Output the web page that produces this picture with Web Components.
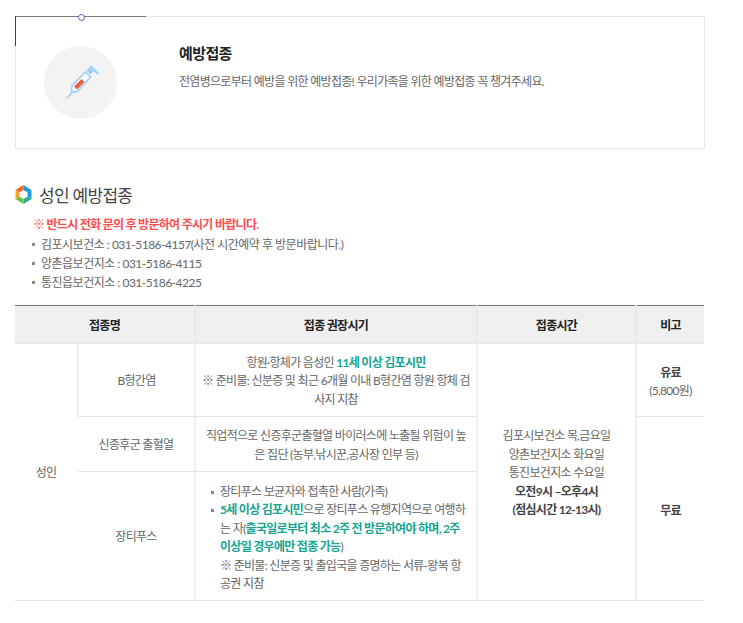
<!DOCTYPE html>
<html lang="ko">
<head>
<meta charset="utf-8">
<title>예방접종</title>
<style>
  body {
    margin: 0;
    padding: 16px 38px 22px 15px;
    background: #fff;
    color: #666;
    font-family: "Lato", "Noto Sans CJK KR", sans-serif;
    font-size: 12px;
  }
</style>
</head>
<body>
<intro-box heading="예방접종">전염병으로부터 예방을 위한 예방접종! 우리가족을 위한 예방접종 꼭 챙겨주세요.</intro-box>
<section-title>성인 예방접종</section-title>
<notice-list>
  <span slot="warn">※ 반드시 전화 문의 후 방문하여 주시기 바랍니다.</span>
  <li>김포시보건소 : 031-5186-4157(사전 시간예약 후 방문바랍니다.)</li>
  <li>양촌읍보건지소 : 031-5186-4115</li>
  <li>통진읍보건지소 : 031-5186-4225</li>
</notice-list>
<vaccine-table></vaccine-table>

<script>
// intro card with the syringe icon
class IntroBox extends HTMLElement {
  constructor() {
    super();
    this.attachShadow({ mode: "open" });
    this.render();
  }

  render() {
    this.shadowRoot.innerHTML = `
      <style>
        :host {
          display: flex;
          position: relative;
          height: 131px;
          border: 1px solid #e8e8e8;
          align-items: flex-start;
        }
        .line-h { position: absolute; left: -1px; top: -1px; width: 131px; height: 1px; background: #777; }
        .line-v { position: absolute; left: -1px; top: -1px; width: 1px; height: 30px; background: #444; }
        .dot {
          position: absolute; left: 62px; top: -3px;
          width: 5px; height: 5px;
          border: 1.5px solid #4a69bd; border-radius: 50%; background: #fff;
        }
        .circle {
          flex: none;
          width: 73px; height: 73px;
          margin: 29px 0 0 28px;
          border-radius: 50%;
          background: #f3f3f3;
          display: flex; align-items: center; justify-content: center;
        }
        .text { margin: 26px 0 0 62px; }
        h2 { margin: 0; font-size: 15px; line-height: 20px; font-weight: 700; color: #222; letter-spacing: -0.6px; }
        p { margin: 10px 0 0; font-size: 12px; line-height: 18px; color: #666; white-space: nowrap; letter-spacing: -0.7px; }
      </style>
      <span class="line-h"></span><span class="line-v"></span><span class="dot"></span>
      <div class="circle">
        <svg width="36" height="36" viewBox="62.500 64 36 36" fill="none">
          <path d="M66 97.300l5-5" stroke="#95cbfb" stroke-width="1.500"/>
          <path d="M85 71l5 5-12.500 14-6.500 1.500.5-7z" stroke="#95cbfb" stroke-width="1.500" fill="#fff" stroke-linejoin="round"/>
          <path d="M75 87l7.500-7.500" stroke="#e8604c" stroke-width="4.500" stroke-linecap="butt"/>
          <path d="M86 69.500l3-3 4 4-3 3z" fill="#95cbfb"/>
          <path d="M89.500 65l8.500 8" stroke="#95cbfb" stroke-width="2"/>
        </svg>
      </div>
      <div class="text">
        <h2>${this.getAttribute("heading")}</h2>
        <p><slot></slot></p>
      </div>
    `;
  }
}

// section heading with the hexagon mark
class SectionTitle extends HTMLElement {
  constructor() {
    super();
    this.attachShadow({ mode: "open" });
    this.shadowRoot.innerHTML = `
      <style>
        :host {
          display: flex;
          align-items: center;
          gap: 7px;
          margin-top: 34px;
          height: 22px;
          font-size: 17px;
          color: #444;
          letter-spacing: -0.7px;
        }
      </style>
      <svg width="17" height="19" viewBox="0 0 17 19">
        <path d="M8.500 0L8.500 5 4.500 7.300 0.500 5z" fill="#f2682a"/>
        <path d="M8.500 0L16.500 5 12.500 7.300 8.500 5z" fill="#1e9be0"/>
        <path d="M16.500 5V14L12.500 11.700V7.300z" fill="#1e9be0"/>
        <path d="M16.500 14L8.500 19V14L12.500 11.700z" fill="#2fae8f"/>
        <path d="M8.500 19L0.500 14 4.500 11.700 8.500 14z" fill="#6cc04a"/>
        <path d="M0.500 14V5L4.500 7.300V11.700z" fill="#f5a623"/>
      </svg>
      <slot></slot>
    `;
  }
}

// red warning plus the list of phone numbers
class NoticeList extends HTMLElement {
  constructor() {
    super();
    this.attachShadow({ mode: "open" });
    this.shadowRoot.innerHTML = `
      <style>
        :host {
          display: block;
          margin: 10px 0 0 17px;
          line-height: 19px;
          letter-spacing: -0.5px;
        }
        .warn { color: #ff4d4d; font-weight: 700; margin: 0 0 1px 1px; font-size: 12px; letter-spacing: -0.7px; }
        ::slotted(li) {
          list-style: none;
          color: #666;
          line-height: 19px;
          font-size: 12px;
        }
        ::slotted(li)::before {
          content: "";
          display: inline-block;
          width: 3px; height: 3px;
          margin: 0 6px 3px 0;
          background: #888;
        }
      </style>
      <div class="warn"><slot name="warn"></slot></div>
      <slot></slot>
    `;
  }
}

class VaccineTable extends HTMLElement {
  constructor() {
    super();
    this.attachShadow({ mode: "open" });
    this.render();
  }

  render() {
    this.shadowRoot.innerHTML = `
      <style>
        :host { display: block; margin-top: 13px; }
        table {
          width: 689px;
          table-layout: fixed;
          border-collapse: collapse;
          border-top: 1px solid #777;
          font-size: 12px;
          line-height: 18.500px;
          color: #666;
          text-align: center;
          letter-spacing: -0.7px;
        }
        th {
          height: 37px;
          padding: 4px 0 0;
          box-sizing: border-box;
          background: #efefef;
          color: #222;
          font-weight: 700;
          border-left: 2px solid #e8e8e8;
          border-bottom: 2px solid #e8e8e8;
        }
        td {
          padding: 3px 6px 0;
          border-left: 2px solid #eee;
          border-bottom: 1px solid #e5e5e5;
        }
        th:first-child, td:first-child { border-left: 0; }
        b { color: #444; font-weight: 700; }
        .green { color: #17a58f; font-weight: 700; }
        .r1 { height: 74px; }
        .r2 { height: 55px; }
        .r3 { height: 129px; }
        td.list { text-align: left; padding: 4px 6px 0 15px; }
        .list div { padding-left: 9px; position: relative; }
        .list i {
          position: absolute; left: 0; top: 8px;
          width: 3px; height: 3px; background: #888;
        }
        .note { padding-top: 5px; }
      </style>
      <table>
        <colgroup>
          <col style="width:63px"><col style="width:117px"><col style="width:282px"><col style="width:159px"><col style="width:68px">
        </colgroup>
        <tr>
          <th colspan="2">접종명</th>
          <th>접종 권장시기</th>
          <th>접종시간</th>
          <th>비고</th>
        </tr>
        <tr class="r1">
          <td rowspan="3">성인</td>
          <td>B형간염</td>
          <td>항원·항체가 음성인 <span class="green">11세 이상 김포시민</span><br>※ 준비물: 신분증 및 최근 6개월 이내 B형간염 항원 항체 검사지 지참</td>
          <td rowspan="3">김포시보건소 목,금요일<br>양촌보건지소 화요일<br>통진보건지소 수요일<br><b>오전9시 –오후4시<br>(점심시간 12-13시)</b></td>
          <td class="note"><b>유료</b><br>(5,800원)</td>
        </tr>
        <tr class="r2">
          <td>신종후군 출혈열</td>
          <td>직업적으로 신증후군출혈열 바이러스에 노출될 위험이 높은 집단 (농부,낚시꾼,공사장 인부 등)</td>
          <td rowspan="2" class="note"><b>무료</b></td>
        </tr>
        <tr class="r3">
          <td>장티푸스</td>
          <td class="list">
            <div><i></i>장티푸스 보균자와 접촉한 사람(가족)</div>
            <div><i></i><span class="green">5세 이상 김포시민</span>으로 장티푸스 유행지역으로 여행하는 자(<span class="green">출국일로부터 최소 2주 전 방문하여야 하며, 2주 이상일 경우에만 접종 가능</span>)<br>※ 준비물: 신분증 및 출입국을 증명하는 서류-왕복 항공권 지참</div>
          </td>
        </tr>
      </table>
    `;
  }
}

customElements.define("intro-box", IntroBox);
customElements.define("section-title", SectionTitle);
customElements.define("notice-list", NoticeList);
customElements.define("vaccine-table", VaccineTable);
</script>
</body>
</html>
